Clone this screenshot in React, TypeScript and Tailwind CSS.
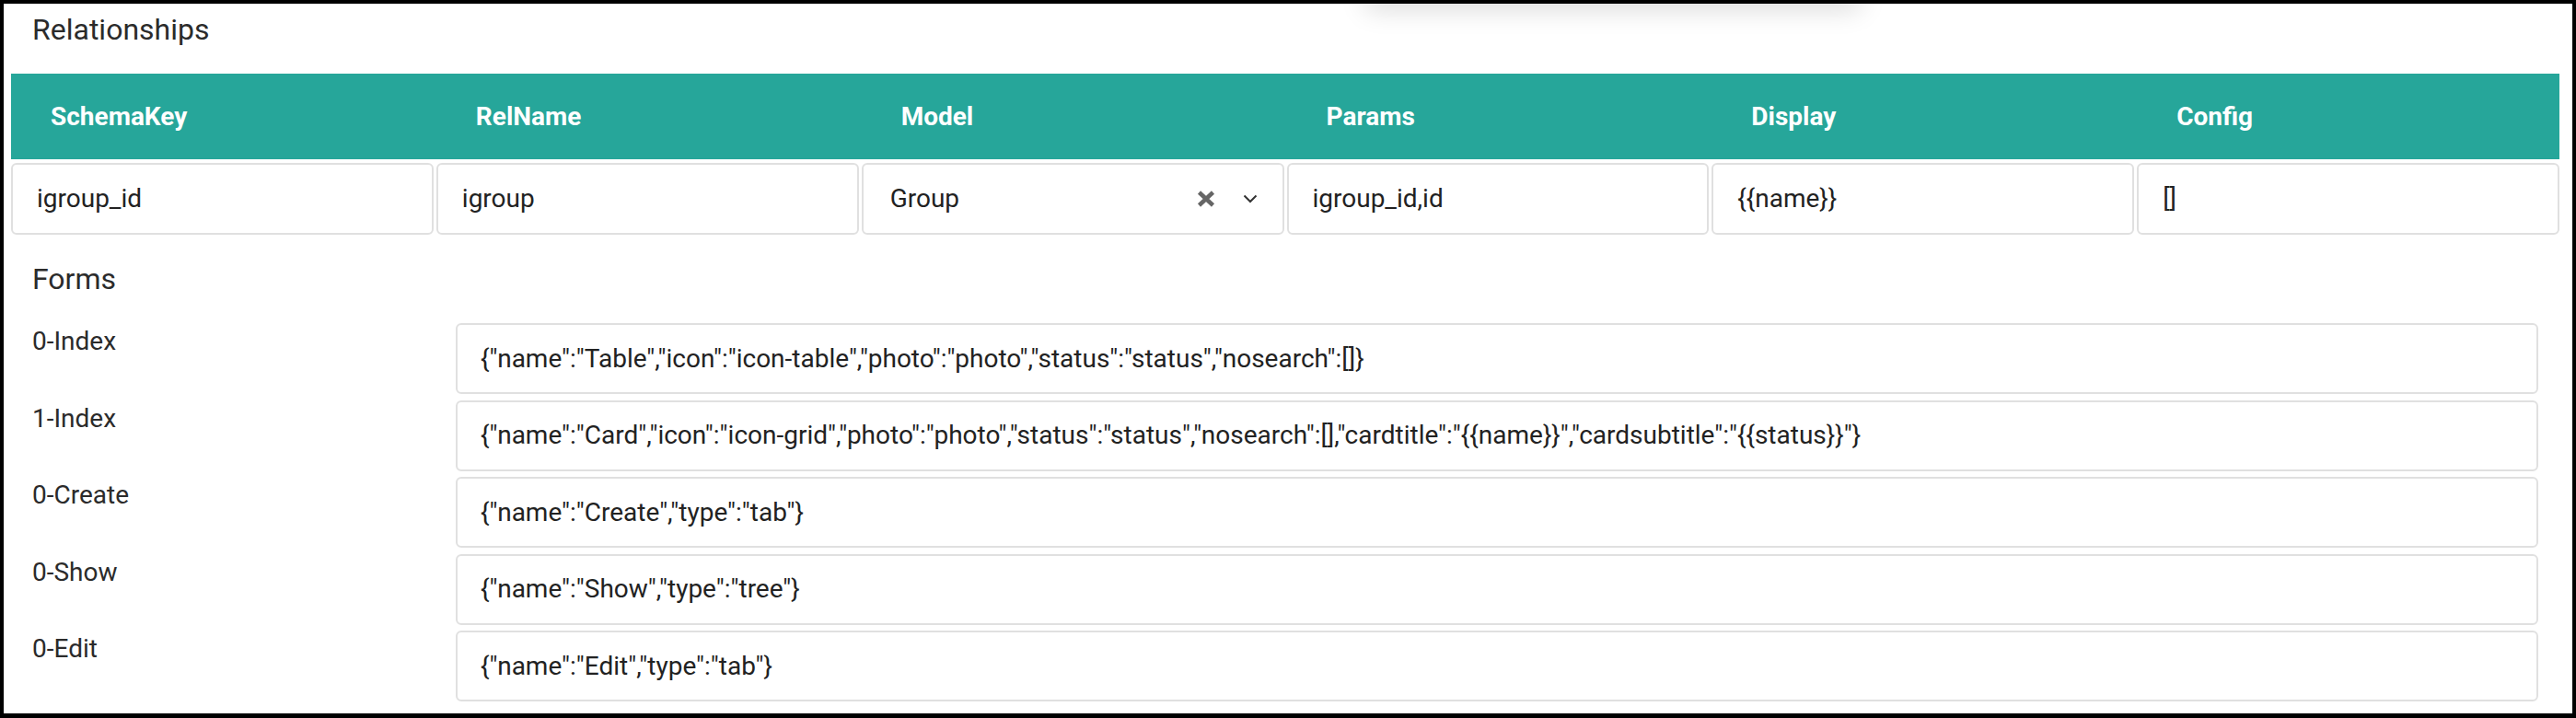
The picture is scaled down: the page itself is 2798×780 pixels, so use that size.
import React from 'react';

const columns = ['SchemaKey', 'RelName', 'Model', 'Params', 'Display', 'Config'];

const forms = [
    { label: '0-Index', value: '{"name":"Table","icon":"icon-table","photo":"photo","status":"status","nosearch":[]}' },
    { label: '1-Index', value: '{"name":"Card","icon":"icon-grid","photo":"photo","status":"status","nosearch":[],"cardtitle":"{{name}}","cardsubtitle":"{{status}}"}' },
    { label: '0-Create', value: '{"name":"Create","type":"tab"}' },
    { label: '0-Show', value: '{"name":"Show","type":"tree"}' },
    { label: '0-Edit', value: '{"name":"Edit","type":"tab"}' },
];

function Field({ children }: { children: React.ReactNode }) {
    return (
        <div className="flex h-[78px] items-center rounded-md border-2 border-[#e0e0e0] bg-white px-[26px] text-[28px] text-[#222]">
            {children}
        </div>
    );
}

function ModelSelect() {
    return (
        <div className="flex h-[78px] items-center rounded-md border-2 border-[#e0e0e0] bg-white pl-[29px] pr-[27px] text-[28px] text-[#222]">
            <span className="flex-1">Group</span>
            {/* clear */}
            <svg width="20" height="18" viewBox="0 0 20 18" className="mr-[30px]">
                <path d="M2.5 2 L17.5 16 M17.5 2 L2.5 16" stroke="#666" strokeWidth="4.5" />
            </svg>
            {/* dropdown */}
            <svg width="16" height="10" viewBox="0 0 16 10">
                <path d="M1.5 1.5 L8 8 L14.5 1.5" fill="none" stroke="#333" strokeWidth="2" />
            </svg>
        </div>
    );
}

export default function App() {
    return (
        <div className="relative h-[780px] overflow-hidden border-x-4 border-t-4 border-b-[5px] border-black bg-white font-['Roboto',sans-serif]">
            {/* shadow of a panel sitting above the view */}
            <div className="absolute left-[1478px] top-[-60px] h-[60px] w-[540px] rounded-b-lg bg-white shadow-[0_8px_28px_rgba(0,0,0,0.13)]" />

            <div className="pl-2 pr-[14px] pt-2">
                <div className="pl-[23px] text-[32px] leading-[40px] text-[#2b2b2b]">Relationships</div>

                <div className="mt-7 grid h-[93px] grid-cols-6 gap-[3px] bg-[#26a69a]">
                    {columns.map(col => (
                        <div key={col} className="flex items-center pl-[43px] text-[28px] font-bold text-white">
                            {col}
                        </div>
                    ))}
                </div>

                <div className="mt-[4px] grid grid-cols-6 gap-[3px]">
                    <Field>igroup_id</Field>
                    <Field>igroup</Field>
                    <ModelSelect />
                    <Field>igroup_id,id</Field>
                    <Field>{'{{name}}'}</Field>
                    <Field>[]</Field>
                </div>
            </div>

            <div className="pl-[31px] pr-[37px]">
                <div className="mt-7 text-[32px] leading-[40px] text-[#2b2b2b]">Forms</div>

                <div className="mt-7 flex flex-col gap-[6.5px]">
                    {forms.map(f => (
                        <div key={f.label} className="flex">
                            <div className="w-[460px] shrink-0 text-[28px] leading-[40px] text-[#2b2b2b]">{f.label}</div>
                            <div className="flex h-[77px] flex-1 items-center rounded-md border-2 border-[#e0e0e0] px-[25px] text-[28px] whitespace-nowrap text-[#222]">
                                {f.value}
                            </div>
                        </div>
                    ))}
                </div>
            </div>
        </div>
    );
}
